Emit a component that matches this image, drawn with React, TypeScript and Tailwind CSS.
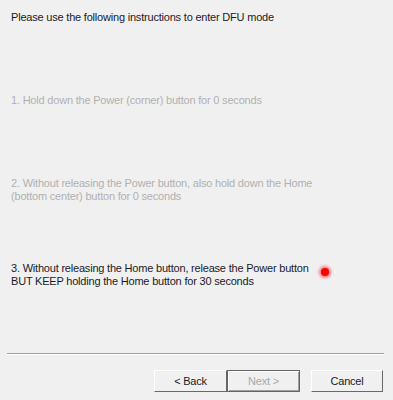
export default function App() {
  return (
    <div className="relative h-[400px] w-[393px] overflow-hidden bg-[#f0f0f0] text-[11px] leading-[13px] tracking-[-0.2px] font-['Liberation_Sans',sans-serif]">
      <div className="px-[11px] pt-[11px]">
        <p className="text-[#1a1a2a]">Please use the following instructions to enter DFU mode</p>
        <p className="mt-[70px] text-[#b0b0b0]">1. Hold down the Power (corner) button for 0 seconds</p>
        <p className="mt-[70px] text-[#b0b0b0]">
          2. Without releasing the Power button, also hold down the Home
          <br />
          (bottom center) button for 0 seconds
        </p>
        <div className="mt-[59px] flex items-start">
          <p className="text-[#1a1a2a]">
            3. Without releasing the Home button, release the Power button
            <br />
            BUT KEEP holding the Home button for 30 seconds
          </p>
          <span className="ml-[12px] mt-[6px] h-[8px] w-[8px] rounded-full bg-[#ff0000] shadow-[0_0_3px_2px_rgba(255,0,0,0.5)]" />
        </div>
      </div>
      <div className="absolute left-[7px] right-[9px] top-[353px] h-[2px] border-t border-t-[#a0a0a0] border-b border-b-white" />
      <div className="absolute right-[10px] top-[370px] flex">
        <button className="h-[22px] w-[73px] border border-t-white border-l-white border-r-[#696969] border-b-[#696969] bg-[#f0f0f0] text-[#1a1a2a]">
          &lt; Back
        </button>
        <button className="h-[22px] w-[73px] border border-[#646464] bg-[#f0f0f0] text-[#a8a8a8] shadow-[inset_1px_1px_0_#fff,inset_-1px_-1px_0_#a0a0a0]">
          Next &gt;
        </button>
        <button className="ml-[11px] h-[22px] w-[72px] border border-t-white border-l-white border-r-[#696969] border-b-[#696969] bg-[#f0f0f0] text-[#1a1a2a]">
          Cancel
        </button>
      </div>
    </div>
  );
}
